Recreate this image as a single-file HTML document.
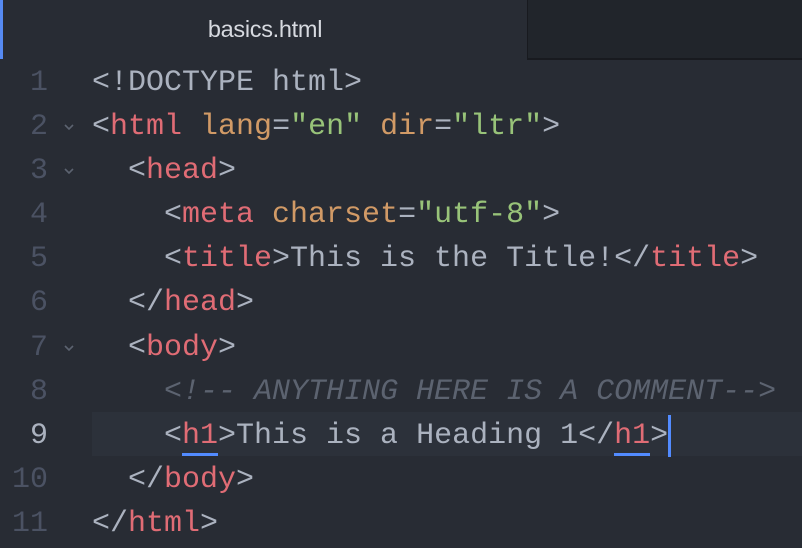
<!DOCTYPE html>
<html><head><style>
body{margin:0;width:802px;height:548px;background:#282c34;overflow:hidden;position:relative;font-family:"Liberation Mono",monospace}
.tab{position:absolute;left:0;top:0;width:527px;height:59px;background:#282c34;border-left:3px solid #568af2;box-sizing:border-box}
.tab span{position:absolute;left:0;right:0;top:16px;text-align:center;font:23.5px "Liberation Sans",sans-serif;color:#d7dae0;letter-spacing:-0.3px}
.rest{position:absolute;left:527px;top:0;right:0;height:58px;background:#21252b;border-left:1px solid #181a1f;border-bottom:2px solid #181a1f}
.code{position:absolute;top:61px;left:0;right:0}
.l{position:relative;height:44.1px;line-height:44.1px;font-size:30px;color:#abb2bf;white-space:pre}
.n{position:absolute;left:0;width:48px;text-align:right;color:#4b5263}
.f{position:absolute;left:63px;top:17px;width:12px;height:10px}
.t{position:absolute;left:92px}
.r{color:#e06c75}.o{color:#d19a66}.g{color:#98c379}.c{color:#5c6370;font-style:italic}
.u{border-bottom:3px solid #528bff}
.cur{display:inline-block;width:3px;height:42px;background:#528bff;vertical-align:top;margin-top:1px}
</style></head><body>
<div class="tab"><span>basics.html</span></div>
<div class="rest"></div>
<div class="code">
<div class="l"><span class="n">1</span><span class="t">&lt;!DOCTYPE html&gt;</span></div>
<div class="l"><span class="n">2</span><svg class="f" viewBox="0 0 12 10"><path d="M2 3L6 7L10 3" fill="none" stroke="#5c6370" stroke-width="1.6"/></svg><span class="t">&lt;<span class="r">html</span> <span class="o">lang</span>=<span class="g">"en"</span> <span class="o">dir</span>=<span class="g">"ltr"</span>&gt;</span></div>
<div class="l"><span class="n">3</span><svg class="f" viewBox="0 0 12 10"><path d="M2 3L6 7L10 3" fill="none" stroke="#5c6370" stroke-width="1.6"/></svg><span class="t">  &lt;<span class="r">head</span>&gt;</span></div>
<div class="l"><span class="n">4</span><span class="t">    &lt;<span class="r">meta</span> <span class="o">charset</span>=<span class="g">"utf-8"</span>&gt;</span></div>
<div class="l"><span class="n">5</span><span class="t">    &lt;<span class="r">title</span>&gt;This is the Title!&lt;/<span class="r">title</span>&gt;</span></div>
<div class="l"><span class="n">6</span><span class="t">  &lt;/<span class="r">head</span>&gt;</span></div>
<div class="l"><span class="n">7</span><svg class="f" viewBox="0 0 12 10"><path d="M2 3L6 7L10 3" fill="none" stroke="#5c6370" stroke-width="1.6"/></svg><span class="t">  &lt;<span class="r">body</span>&gt;</span></div>
<div class="l"><span class="n">8</span><span class="t"><span class="c">    &lt;!-- ANYTHING HERE IS A COMMENT--&gt;</span></span></div>
<div class="l"><span class="n" style="color:#abb2bf">9</span><div style="position:absolute;left:92px;right:0;top:-2px;bottom:2px;background:#2c313a"></div><span class="t">    &lt;<span class="r u">h1</span>&gt;This is a Heading 1&lt;/<span class="r u">h1</span>&gt;<span class="cur"></span></span></div>
<div class="l"><span class="n">10</span><span class="t">  &lt;/<span class="r">body</span>&gt;</span></div>
<div class="l"><span class="n">11</span><span class="t">&lt;/<span class="r">html</span>&gt;</span></div>
</div>
</body></html>
